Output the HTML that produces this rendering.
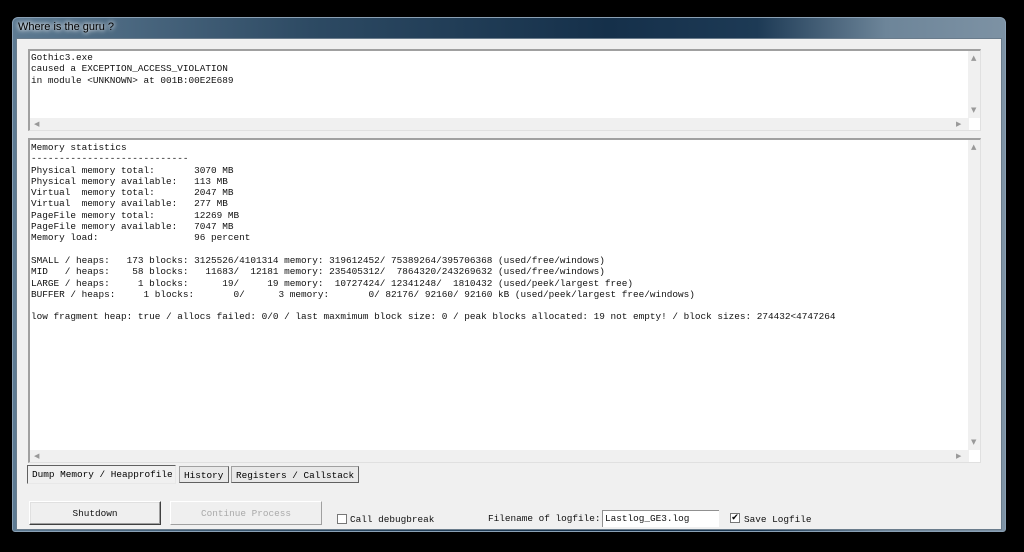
<!DOCTYPE html>
<html><head><style>
body{margin:0;width:1024px;height:552px;background:#000;overflow:hidden;position:relative;font-family:"Liberation Mono",monospace;}
.win{position:absolute;left:12px;top:17px;width:994px;height:515px;border-radius:6px 6px 3px 3px;background:linear-gradient(90deg,#5d7a92 0%,#2d4a63 30%,#15304a 60%,#1d3a55 75%,#6d8599 88%,#7d92a4 100%);border:1px solid #8aa0b4;box-sizing:border-box;}
.title{position:absolute;left:18px;top:21px;font:11px "Liberation Sans",sans-serif;color:#000;text-shadow:0 0 6px #fff,0 0 4px #fff;}
.client{position:absolute;left:16px;top:38px;width:986px;height:492px;background:#f0f0f0;border:1px solid #6a7c8c;box-sizing:border-box;}
.box{position:absolute;background:#fff;border-top:2px solid #a0a0a0;border-left:2px solid #a0a0a0;border-right:1px solid #e0e0e0;border-bottom:1px solid #e0e0e0;box-sizing:border-box;}
pre{margin:0;font:9.4px/11.3px "Liberation Mono",monospace;color:#111;position:absolute;left:1px;}
.vs{position:absolute;right:0;top:0;width:12px;background:#f0f0f0;}
.hs{position:absolute;left:0;height:12px;background:#f0f0f0;}
.ar{position:absolute;font-size:7px;color:#999;font-family:"DejaVu Sans",sans-serif;}
.tab{position:absolute;top:466px;height:17px;font:9.4px "Liberation Mono",monospace;white-space:nowrap;background:#f4f4f4;border:1px solid #a0a0a0;border-right-color:#606060;border-bottom-color:#606060;box-sizing:border-box;padding:3px 4px 0;}
.btn{position:absolute;top:501px;height:24px;font:9.4px "Liberation Mono",monospace;text-align:center;line-height:24px;box-sizing:border-box;white-space:nowrap;}
.lab{position:absolute;font:9.4px "Liberation Mono",monospace;color:#111;white-space:nowrap;}
.cb{position:absolute;width:10px;height:10px;border:1px solid #777;background:#fff;box-sizing:border-box;}
</style></head><body>
<div class="win"></div>
<div class="title">Where is the guru ?</div>
<div class="client"></div>

<div class="box" style="left:28px;top:49px;width:953px;height:82px;">
<pre style="top:1px;">Gothic3.exe
caused a EXCEPTION_ACCESS_VIOLATION
in module &lt;UNKNOWN&gt; at 001B:00E2E689</pre>
<div class="vs" style="height:67px;"><span class="ar" style="left:3px;top:3px;">▲</span><span class="ar" style="left:3px;top:55px;">▼</span></div>
<div class="hs" style="top:67px;width:939px;"><span class="ar" style="left:4px;top:2px;">◀</span><span class="ar" style="left:926px;top:2px;">▶</span></div>
</div>

<div class="box" style="left:28px;top:138px;width:953px;height:325px;">
<pre style="top:2px;">Memory statistics
----------------------------
Physical memory total:       3070 MB
Physical memory available:   113 MB
Virtual  memory total:       2047 MB
Virtual  memory available:   277 MB
PageFile memory total:       12269 MB
PageFile memory available:   7047 MB
Memory load:                 96 percent

SMALL / heaps:   173 blocks: 3125526/4101314 memory: 319612452/ 75389264/395706368 (used/free/windows)
MID   / heaps:    58 blocks:   11683/  12181 memory: 235405312/  7864320/243269632 (used/free/windows)
LARGE / heaps:     1 blocks:      19/     19 memory:  10727424/ 12341248/  1810432 (used/peek/largest free)
BUFFER / heaps:     1 blocks:       0/      3 memory:       0/ 82176/ 92160/ 92160 kB (used/peek/largest free/windows)

low fragment heap: true / allocs failed: 0/0 / last maxmimum block size: 0 / peak blocks allocated: 19 not empty! / block sizes: 274432&lt;4747264</pre>
<div class="vs" style="height:310px;"><span class="ar" style="left:3px;top:3px;">▲</span><span class="ar" style="left:3px;top:298px;">▼</span></div>
<div class="hs" style="top:310px;width:939px;"><span class="ar" style="left:4px;top:2px;">◀</span><span class="ar" style="left:926px;top:2px;">▶</span></div>
</div>

<div class="tab" style="left:27px;width:149px;border-color:#606060 #e8e8e8 #e8e8e8 #606060;top:465px;height:19px;background:#f0f0f0;">Dump Memory / Heapprofile</div>
<div class="tab" style="left:179px;width:50px;background:#e8e8e8;">History</div>
<div class="tab" style="left:231px;width:128px;background:#e8e8e8;">Registers / Callstack</div>

<div class="btn" style="left:29px;width:132px;border:1px solid #404040;border-top-color:#fff;border-left-color:#fff;box-shadow:inset -1px -1px 0 #a0a0a0,inset 1px 1px 0 #e0e0e0;background:#efefef;color:#111;">Shutdown</div>
<div class="btn" style="left:170px;width:152px;border:1px solid #a0a0a0;border-top-color:#fff;border-left-color:#fff;background:#efefef;color:#aaa;">Continue Process</div>

<div class="cb" style="left:337px;top:514px;"></div>
<div class="lab" style="left:350px;top:514px;">Call debugbreak</div>
<div class="lab" style="left:488px;top:513px;">Filename of logfile:</div>
<div style="position:absolute;left:602px;top:510px;width:117px;height:17px;background:#fff;border-top:1px solid #909090;border-left:1px solid #909090;box-sizing:border-box;"></div>
<div class="lab" style="left:605px;top:513px;">Lastlog_GE3.log</div>
<div class="cb" style="left:730px;top:513px;font:9px 'DejaVu Sans';line-height:8px;text-align:center;">✔</div>
<div class="lab" style="left:744px;top:514px;">Save Logfile</div>
</body></html>
